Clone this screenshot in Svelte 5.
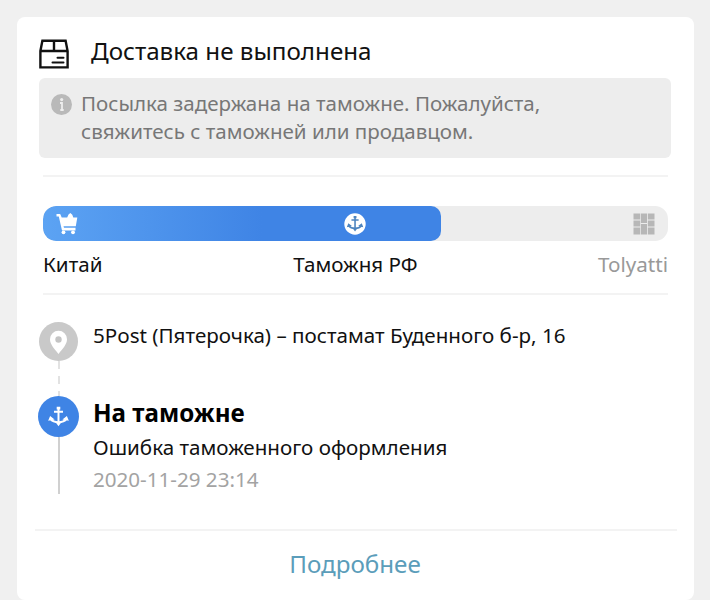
<script lang="ts">
	interface Stage {
		name: string;
		upcoming?: boolean;
	}

	const progress = 398;
	const stages: Stage[] = [
		{ name: 'Китай' },
		{ name: 'Таможня РФ' },
		{ name: 'Tolyatti', upcoming: true }
	];
</script>

{#snippet anchor()}
	<g fill="none" stroke="currentColor">
		<path d="M12 2v18M7 6.500h10" stroke-width="2.200" />
		<path d="M3 14.500c2 2.500 5 3.700 9 3.700s7-1.200 9-3.700" stroke-width="2.400" />
	</g>
	<path d="M.5 16.500l2.200-5.300 5 3.800zM23.500 16.500l-2.200-5.300-5 3.800zM9 18.500h6L12 22.500zM10 1h4v3h-4z" fill="currentColor" />
{/snippet}

<main class="card">
	<header>
		<svg class="parcel" viewBox="0 0 30 30" fill="none" stroke="#111" stroke-width="2.400">
			<path d="M1.400 12 3.400 1.800h23.200l2 10.200v16.400H1.400zM1.400 12h27.200M15 1.500V12" />
			<path d="M18.500 18.800h6M13.500 23.500h11" stroke-width="2" stroke-linecap="round" />
		</svg>
		<h1>Доставка не выполнена</h1>
	</header>

	<section class="notice">
		<svg class="info" viewBox="0 0 21 21">
			<circle cx="10.500" cy="10.500" r="10.500" fill="#b9b9b9" />
			<circle cx="10.700" cy="5.600" r="1.600" fill="#eee" />
			<path d="M9 9h2v7M9.300 16h3.400" fill="none" stroke="#eee" stroke-width="1.800" />
		</svg>
		<p>Посылка задержана на таможне. Пожалуйста,<br />свяжитесь с таможней или продавцом.</p>
	</section>

	<section class="route">
		<div class="track">
			<div class="fill" style:width="{progress}px"></div>
			<div class="markers">
				<svg class="cart" viewBox="0 0 22 22" fill="#fff">
					<path d="M.5 1h3.700l1.500 3.500h5.500l1.300-3L14.300 0l2 1.800 1 2.700h4l-1.500 8.700H7.500l.5 1.600h11.500v2.700H6L2.800 3.500H.5z" />
					<circle cx="7.500" cy="19.300" r="1.900" />
					<circle cx="17" cy="19.300" r="1.900" />
				</svg>
				<svg class="customs" viewBox="0 0 22 22">
					<circle cx="11" cy="11" r="10.700" fill="#fff" />
					<g transform="translate(2.400 2.300) scale(.72)">{@render anchor()}</g>
				</svg>
				<svg class="blocks" viewBox="0 0 22 22" fill="#b7b7b7">
					<path d="M.5.500h6.700v6H.5zM7.900.500H14v9.500H7.900zM14.800.500h6.700v6h-6.700zM.5 7.500h6.700v6H.5zM14.800 7.500h6.700v6h-6.700zM.5 14.500h6.700v7H.5zM7.900 11H14v10.500H7.900zM14.800 14.500h6.700v7h-6.700z" />
				</svg>
			</div>
		</div>
		<div class="stages">
			{#each stages as stage}
				<span class:upcoming={stage.upcoming}>{stage.name}</span>
			{/each}
		</div>
	</section>

	<section class="timeline">
		<div class="event destination">
			<div class="rail">
				<svg class="pin" viewBox="0 0 39 39">
					<circle cx="19.500" cy="19.500" r="19.500" fill="#c9c9c9" />
					<path d="M19.500 32C15.500 27 11 22.500 11 17.300a8.500 8.500 0 0 1 17 0c0 5.200-4.500 9.700-8.500 14.700z" fill="#fff" />
					<circle cx="19.500" cy="17.500" r="3.200" fill="#c4c4c4" />
				</svg>
				<div class="line dashed"></div>
			</div>
			<p>5Post (Пятерочка) – постамат Буденного б-р, 16</p>
		</div>
		<div class="event">
			<div class="rail">
				<svg class="held" viewBox="0 0 41 41">
					<circle cx="20.500" cy="20.500" r="20.500" fill="#3f84e5" />
					<g transform="translate(9.700 9.900) scale(.9)">{@render anchor()}</g>
				</svg>
				<div class="line"></div>
			</div>
			<div class="details">
				<h2>На таможне</h2>
				<p>Ошибка таможенного оформления</p>
				<time>2020-11-29 23:14</time>
			</div>
		</div>
	</section>

	<footer><button>Подробнее</button></footer>
</main>

<style>
	:global(body) {
		background: #f0f0f0;
		overflow: hidden;
	}

	.card {
		box-sizing: border-box;
		width: 677px;
		height: 583px;
		margin: 17px 0 0 17px;
		border-radius: 8px;
		background: #fff;
		color: #111;
		font-family: 'Noto Sans', sans-serif;
		overflow: hidden;
	}

	h1,
	h2,
	p {
		margin: 0;
		font-weight: 400;
		white-space: nowrap;
	}

	svg {
		display: block;
		flex: none;
	}

	header {
		display: flex;
		height: 61px;
		padding-left: 22px;
	}

	.parcel {
		width: 30px;
		height: 30px;
		margin-top: 22px;
	}

	h1 {
		margin: 17px 0 0 22px;
		font-size: 24.2px;
		line-height: 34px;
	}

	.notice {
		box-sizing: border-box;
		display: flex;
		gap: 9px;
		width: 632px;
		height: 80px;
		margin-left: 22px;
		padding: 12px;
		border-radius: 6px;
		background: #ededed;
		color: #777;
		font-size: 20.55px;
		line-height: 27.5px;
	}

	.info {
		width: 21px;
		height: 21px;
		margin-top: 4px;
	}

	.route {
		box-sizing: border-box;
		width: 625px;
		height: 120px;
		margin: 17px 0 0 26px;
		padding-top: 29px;
		border-top: 2px solid #f3f3f3;
		border-bottom: 2px solid #f3f3f3;
	}

	.track {
		display: grid;
		height: 35px;
		border-radius: 13px;
		background: #ededed;
		overflow: hidden;
	}

	.fill,
	.markers {
		grid-area: 1 / 1;
	}

	.fill {
		border-radius: 13px 10px 10px 13px;
		background: linear-gradient(90deg, #5ca3f3, #3f84e5 55%);
	}

	.markers {
		display: flex;
		align-items: center;
	}

	.markers svg {
		width: 22px;
		height: 22px;
	}

	.markers .cart {
		margin-left: 13px;
	}

	.markers .customs {
		margin-left: 266px;
		color: #4d84bf;
	}

	.markers .blocks {
		margin: 0 13px 0 auto;
	}

	.stages {
		display: grid;
		grid-template-columns: 1fr auto 1fr;
		margin-top: 9px;
		font-size: 20.6px;
		line-height: 28px;
	}

	.upcoming {
		color: #999;
		text-align: right;
	}

	.timeline {
		height: 234px;
		padding: 27px 0 0 21px;
		box-sizing: border-box;
	}

	.event {
		display: flex;
		gap: 14px;
		font-size: 20.6px;
	}

	.destination {
		height: 74px;
	}

	.destination p {
		line-height: 26px;
	}

	.rail {
		display: flex;
		flex-direction: column;
		align-items: center;
		width: 41px;
	}

	.pin {
		width: 39px;
		height: 39px;
	}

	.held {
		width: 41px;
		height: 41px;
		color: #fff;
	}

	.line {
		width: 2px;
		height: 57px;
		background: #d0d0d0;
	}

	.dashed {
		height: 35px;
		background: repeating-linear-gradient(#e2e2e2 0 8px, transparent 8px 15px);
	}

	h2 {
		font-size: 24.2px;
		font-weight: 700;
		line-height: 34px;
		color: #000;
	}

	.details p {
		line-height: 35px;
	}

	time {
		display: block;
		color: #a3a3a3;
		line-height: 29px;
	}

	footer {
		width: 642px;
		margin-left: 18px;
		border-top: 2px solid #f3f3f3;
		text-align: center;
	}

	button {
		margin: 16px 2px 0 0;
		padding: 0;
		border: 0;
		background: none;
		color: #5b9dba;
		font: 24.2px/34px 'Noto Sans', sans-serif;
	}
</style>
